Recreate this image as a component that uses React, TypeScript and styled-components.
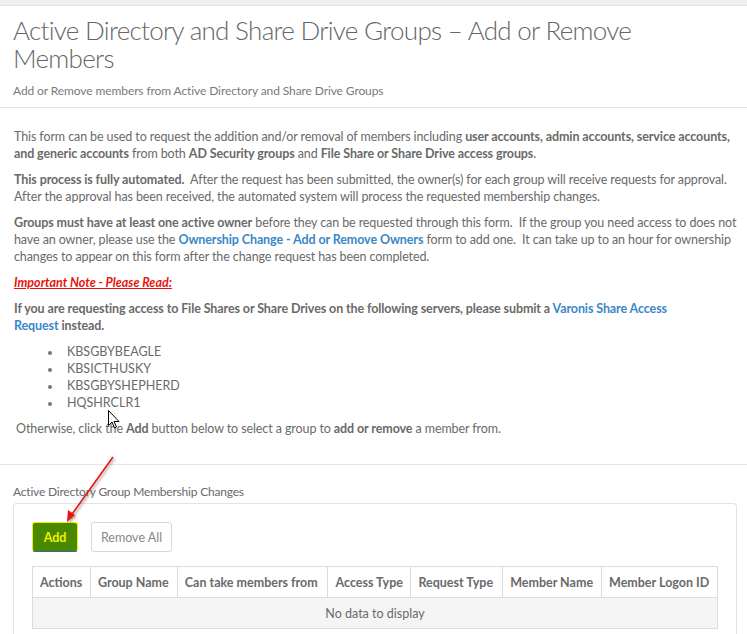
import React from "react";
import styled, { createGlobalStyle } from "styled-components";

const Global = createGlobalStyle`
  html, body { margin: 0; padding: 0; background: #fff; }
  body { font-family: Lato, "Open Sans", sans-serif; color: #6a6a6a; font-size: 12.5px; }
  * { box-sizing: border-box; }
`;

const Page = styled.div`
  position: relative;
  width: 747px;
  height: 634px;
  overflow: hidden;
  background: #fff;
`;

const TopBand = styled.div`
  height: 6px;
  background: #eef1f1;
  border-bottom: 1px solid #dfe3e3;
`;

const Header = styled.header`
  padding: 10px 13px 9px;
  border-bottom: 1px solid #e3e6e6;
`;

const Title = styled.h1`
  margin: 0;
  font-weight: 300;
  font-size: 26px;
  line-height: 28px;
  letter-spacing: -0.7px;
  color: #666;
  max-width: 640px;
`;

const Subtitle = styled.div`
  margin-top: 11px;
  font-size: 12px;
  letter-spacing: -0.1px;
  color: #7a7a7a;
`;

const Content = styled.section`
  padding: 20px 4px 18px 14px;
  border-bottom: 1px solid #e3e6e6;
`;

const P = styled.p<{ $indent?: number }>`
  margin: 0 0 9px;
  padding-left: ${(p) => p.$indent ?? 0}px;
  line-height: 17px;
  letter-spacing: -0.1px;
  white-space: nowrap;
`;

const B = styled.b`
  font-weight: 700;
`;

const Link = styled.a`
  color: #3b87c8;
  font-weight: 700;
  text-decoration: none;
`;

const Note = styled.p`
  margin: 0 0 9px;
  line-height: 17px;
  color: #e8120c;
  font-weight: 700;
  font-style: italic;
  text-decoration: underline;
`;

const List = styled.ul`
  margin: 0 0 9px;
  padding-left: 48px;
  list-style: disc;
`;

const Item = styled.li`
  line-height: 17px;
  padding-left: 5px;
  &::marker { color: #777; font-size: 11px; }
`;

const Section = styled.section`
  padding: 18px 10px 0 13px;
`;

const SectionLabel = styled.div`
  font-size: 12px;
  letter-spacing: -0.2px;
  line-height: 17px;
  margin-bottom: 3px;
`;

const Box = styled.div`
  border: 1px solid #e0e4e4;
  border-bottom: none;
  border-radius: 4px 4px 0 0;
  padding: 18px 18px 6px 18px;
  height: 140px;
`;

const Toolbar = styled.div`
  display: flex;
  gap: 13px;
  margin-bottom: 14px;
`;

const Button = styled.button<{ $primary?: boolean }>`
  height: 30px;
  padding: 0;
  font-family: inherit;
  font-size: 12.5px;
  border-radius: 3px;
  cursor: pointer;
  ${(p) =>
    p.$primary
      ? `
    background: #4a8800;
    color: #f2f200;
    font-weight: 700;
    border: 1px solid #f0f000;
    border-bottom-color: #2f6aa8;
    width: 46px;
  `
      : `
    background: #fff;
    color: #888;
    border: 1px solid #d8d8d8;
    width: 81px;
  `}
`;

const Table = styled.table`
  border-collapse: collapse;
  width: 686px;
  th, td { border: 1px solid #dcdcdc; }
  th {
    height: 31px;
    font-weight: 700;
    color: #6a6a6a;
    text-align: left;
    padding: 0 7px;
    white-space: nowrap;
  }
  td {
    height: 31px;
    background: #f5f5f5;
    text-align: center;
  }
`;

const Overlay = styled.svg`
  position: absolute;
  left: 0;
  top: 0;
  pointer-events: none;
`;

const cols = [
  { name: "Actions", w: 58 },
  { name: "Group Name", w: 87 },
  { name: "Can take members from", w: 151 },
  { name: "Access Type", w: 83 },
  { name: "Request Type", w: 92 },
  { name: "Member Name", w: 99 },
  { name: "Member Logon ID", w: 116 },
];

const servers = ["KBSGBYBEAGLE", "KBSICTHUSKY", "KBSGBYSHEPHERD", "HQSHRCLR1"];

export default function App() {
  return (
    <Page>
      <Global />
      <TopBand />
      <Header>
        <Title>Active Directory and Share Drive Groups – Add or Remove Members</Title>
        <Subtitle>Add or Remove members from Active Directory and Share Drive Groups</Subtitle>
      </Header>
      <Content>
        <P>
          This form can be used to request the addition and/or removal of members including{" "}
          <B>user accounts, admin accounts, service accounts,</B>
          <br />
          <B>and generic accounts</B> from both <B>AD Security groups</B> and{" "}
          <B>File Share or Share Drive access groups</B>.
        </P>
        <P>
          <B>This process is fully automated.</B>&nbsp; After the request has been submitted, the owner(s) for each
          group will receive requests for approval.
          <br />
          After the approval has been received, the automated system will process the requested membership changes.
        </P>
        <P>
          <B>Groups must have at least one active owner</B> before they can be requested through this form.&nbsp; If
          the group you need access to does not
          <br />
          have an owner, please use the <Link href="#">Ownership Change - Add or Remove Owners</Link> form to add
          one.&nbsp; It can take up to an hour for ownership
          <br />
          changes to appear on this form after the change request has been completed.
        </P>
        <Note>Important Note - Please Read:</Note>
        <P>
          <B>
            If you are requesting access to File Shares or Share Drives on the following servers, please submit a{" "}
            <Link href="#">Varonis Share Access</Link>
            <br />
            <Link href="#">Request</Link> instead.
          </B>
        </P>
        <List>
          {servers.map((s) => (
            <Item key={s}>{s}</Item>
          ))}
        </List>
        <P $indent={2}>
          Otherwise, click the <B>Add</B> button below to select a group to <B>add or remove</B> a member from.
        </P>
      </Content>
      <Section>
        <SectionLabel>Active Directory Group Membership Changes</SectionLabel>
        <Box>
          <Toolbar>
            <Button $primary>Add</Button>
            <Button>Remove All</Button>
          </Toolbar>
          <Table>
            <colgroup>
              {cols.map((c) => (
                <col key={c.name} style={{ width: c.w }} />
              ))}
            </colgroup>
            <thead>
              <tr>
                {cols.map((c) => (
                  <th key={c.name}>{c.name}</th>
                ))}
              </tr>
            </thead>
            <tbody>
              <tr>
                <td colSpan={7}>No data to display</td>
              </tr>
            </tbody>
          </Table>
        </Box>
      </Section>
      <Overlay width="747" height="634" viewBox="0 0 747 634">
        <defs>
          <filter id="sh" x="-20%" y="-20%" width="140%" height="140%">
            <feDropShadow dx="1.5" dy="1.5" stdDeviation="1" floodColor="#000" floodOpacity="0.35" />
          </filter>
        </defs>
        <g filter="url(#sh)">
          <line x1="113" y1="457" x2="70" y2="517" stroke="#e8140c" strokeWidth="1.6" />
          <path d="M67 522 L68 510 L75 515 Z" fill="#e8140c" />
        </g>
        <path
          d="M108.5 410.5 L108.5 425.5 L112 422 L114.5 428 L116.5 427 L114 421.5 L119 421.5 Z"
          fill="#fff"
          stroke="#000"
          strokeWidth="1"
          strokeLinejoin="round"
        />
      </Overlay>
    </Page>
  );
}
